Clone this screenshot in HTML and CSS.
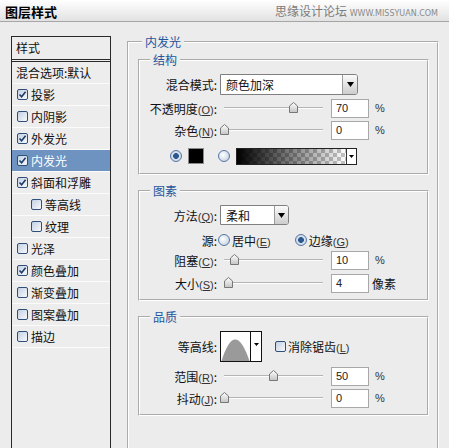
FILE: index.html
```html
<!DOCTYPE html>
<html lang="zh">
<head>
<meta charset="utf-8">
<title>图层样式</title>
<link rel="stylesheet" href="styles.css">
</head>
<body>
<div class="titlebar">
  <span class="title">图层样式</span>
  <span class="brand">思缘设计论坛 <span class="url">www.MISSYUAN.COM</span></span>
</div>
<div class="main">
  <div class="sidebar">
    <div class="side-head">样式</div>
    <div class="side-row plain">混合选项:默认</div>
    <div class="side-row"><span class="cb on"><svg viewBox="0 0 9 9" width="9" height="9"><path d="M1.5 4.5 L3.6 6.8 L7.6 1.8" fill="none" stroke="#1d3d69" stroke-width="1.6"/></svg></span>投影</div>
    <div class="side-row"><span class="cb"></span>内阴影</div>
    <div class="side-row"><span class="cb on"><svg viewBox="0 0 9 9" width="9" height="9"><path d="M1.5 4.5 L3.6 6.8 L7.6 1.8" fill="none" stroke="#1d3d69" stroke-width="1.6"/></svg></span>外发光</div>
    <div class="side-row active"><span class="cb on"><svg viewBox="0 0 9 9" width="9" height="9"><path d="M1.5 4.5 L3.6 6.8 L7.6 1.8" fill="none" stroke="#1d3d69" stroke-width="1.6"/></svg></span>内发光</div>
    <div class="side-row"><span class="cb on"><svg viewBox="0 0 9 9" width="9" height="9"><path d="M1.5 4.5 L3.6 6.8 L7.6 1.8" fill="none" stroke="#1d3d69" stroke-width="1.6"/></svg></span>斜面和浮雕</div>
    <div class="side-row sub"><span class="cb"></span>等高线</div>
    <div class="side-row sub"><span class="cb"></span>纹理</div>
    <div class="side-row"><span class="cb"></span>光泽</div>
    <div class="side-row"><span class="cb on"><svg viewBox="0 0 9 9" width="9" height="9"><path d="M1.5 4.5 L3.6 6.8 L7.6 1.8" fill="none" stroke="#1d3d69" stroke-width="1.6"/></svg></span>颜色叠加</div>
    <div class="side-row"><span class="cb"></span>渐变叠加</div>
    <div class="side-row"><span class="cb"></span>图案叠加</div>
    <div class="side-row"><span class="cb"></span>描边</div>
  </div>

  <div class="content">
    <fieldset class="outer">
      <legend class="lg-outer">内发光</legend>

      <fieldset class="group g1">
        <legend>结构</legend>
        <div class="row r-mode">
          <span class="lbl">混合模式:</span>
          <div class="select wide"><span class="sel-text">颜色加深</span><span class="sel-btn"><svg width="7" height="5" viewBox="0 0 7 5"><path d="M0 0 H7 L3.5 5 Z" fill="#000"/></svg></span></div>
        </div>
        <div class="row r-op">
          <span class="lbl">不透明度<span class="k">(<u>O</u>)</span>:</span>
          <div class="slider"><svg class="thumb" style="left:69px" width="9" height="11" viewBox="0 0 9 11"><defs><linearGradient id="tg1" x1="0" y1="0" x2="0" y2="1"><stop offset="0" stop-color="#fff"/><stop offset="1" stop-color="#c4c4c4"/></linearGradient></defs><path d="M0.5 10.5 V4 L4.5 0.5 L8.5 4 V10.5 Z" fill="url(#tg1)" stroke="#777"/></svg></div>
          <span class="num">70</span><span class="unit">%</span>
        </div>
        <div class="row r-noise">
          <span class="lbl">杂色<span class="k">(<u>N</u>)</span>:</span>
          <div class="slider"><svg class="thumb" style="left:0px" width="9" height="11" viewBox="0 0 9 11"><path d="M0.5 10.5 V4 L4.5 0.5 L8.5 4 V10.5 Z" fill="url(#tg1)" stroke="#777"/></svg></div>
          <span class="num">0</span><span class="unit">%</span>
        </div>
        <div class="row r-color">
          <span class="radio on"></span>
          <span class="swatch"></span>
          <span class="radio r2"></span>
          <div class="grad"><span class="grad-fill"></span><span class="grad-btn"><svg width="5" height="3" viewBox="0 0 5 3"><path d="M0 0 H5 L2.5 3 Z" fill="#000"/></svg></span></div>
        </div>
      </fieldset>

      <fieldset class="group g2">
        <legend>图素</legend>
        <div class="row r-method">
          <span class="lbl">方法<span class="k">(<u>Q</u>)</span>:</span>
          <div class="select narrow"><span class="sel-text">柔和</span><span class="sel-btn"><svg width="7" height="5" viewBox="0 0 7 5"><path d="M0 0 H7 L3.5 5 Z" fill="#000"/></svg></span></div>
        </div>
        <div class="row r-src">
          <span class="lbl">源:</span>
          <span class="radio src1"></span><span class="opt">居中<span class="k">(<u>E</u>)</span></span>
          <span class="radio on src2"></span><span class="opt">边缘<span class="k">(<u>G</u>)</span></span>
        </div>
        <div class="row r-choke">
          <span class="lbl">阻塞<span class="k">(<u>C</u>)</span>:</span>
          <div class="slider"><svg class="thumb" style="left:10px" width="9" height="11" viewBox="0 0 9 11"><path d="M0.5 10.5 V4 L4.5 0.5 L8.5 4 V10.5 Z" fill="url(#tg1)" stroke="#777"/></svg></div>
          <span class="num">10</span><span class="unit">%</span>
        </div>
        <div class="row r-size">
          <span class="lbl">大小<span class="k">(<u>S</u>)</span>:</span>
          <div class="slider"><svg class="thumb" style="left:4px" width="9" height="11" viewBox="0 0 9 11"><path d="M0.5 10.5 V4 L4.5 0.5 L8.5 4 V10.5 Z" fill="url(#tg1)" stroke="#777"/></svg></div>
          <span class="num">4</span><span class="unit px">像素</span>
        </div>
      </fieldset>

      <fieldset class="group g3">
        <legend>品质</legend>
        <div class="row r-contour">
          <span class="lbl">等高线:</span>
          <div class="contour">
            <svg width="29" height="29" viewBox="0 0 29 29"><rect width="29" height="29" fill="#fff"/><path d="M0.5 29 Q14 -14 28.5 29 Z" fill="#9a9a9a"/></svg>
            <span class="ct-btn"><svg width="5" height="3" viewBox="0 0 5 3"><path d="M0 0 H5 L2.5 3 Z" fill="#000"/></svg></span>
          </div>
          <span class="cb aa"></span><span class="opt">消除锯齿<span class="k">(<u>L</u>)</span></span>
        </div>
        <div class="row r-range">
          <span class="lbl">范围<span class="k">(<u>R</u>)</span>:</span>
          <div class="slider"><svg class="thumb" style="left:49px" width="9" height="11" viewBox="0 0 9 11"><path d="M0.5 10.5 V4 L4.5 0.5 L8.5 4 V10.5 Z" fill="url(#tg1)" stroke="#777"/></svg></div>
          <span class="num">50</span><span class="unit">%</span>
        </div>
        <div class="row r-jitter">
          <span class="lbl">抖动<span class="k">(<u>J</u>)</span>:</span>
          <div class="slider"><svg class="thumb" style="left:0px" width="9" height="11" viewBox="0 0 9 11"><path d="M0.5 10.5 V4 L4.5 0.5 L8.5 4 V10.5 Z" fill="url(#tg1)" stroke="#777"/></svg></div>
          <span class="num">0</span><span class="unit">%</span>
        </div>
      </fieldset>
    </fieldset>
  </div>
</div>
</body>
</html>
```

FILE: styles.css
```css
* { box-sizing: border-box; }
html, body { margin: 0; padding: 0; }
body {
  width: 449px;
  height: 448px;
  overflow: hidden;
  background: #ececec;
  font-family: "Noto Sans CJK SC", sans-serif;
  font-size: 12px;
  color: #111;
}

/* title bar */
.titlebar {
  height: 22px;
  display: flex;
  justify-content: space-between;
  padding: 0 11px 0 5px;
  background: linear-gradient(#ffffff, #e2e2e2);
  border-bottom: 1px solid #a6a6a6;
}
.title {
  font-weight: bold;
  font-size: 13px;
  line-height: 18px;
  padding-top: 3px;
  color: #000;
}
.brand {
  align-self: flex-end;
  line-height: 14px;
  padding-bottom: 0;
  color: #7c7c7c;
  font-size: 12px;
}
.url {
  font-family: "DejaVu Sans", sans-serif;
  font-size: 8px;
  text-transform: uppercase;
  color: #8a8a8a;
}

/* main */
.main {
  display: flex;
  align-items: flex-start;
}

.sidebar {
  margin: 14px 0 0 11px;
  width: 100px;
  height: 430px;
  border: 1px solid #2a2a2a;
  background: #ededed;
  flex: none;
}
.side-head {
  height: 25px;
  line-height: 22px;
  padding-left: 4px;
  border-bottom: 3px double #2a2a2a;
}
.side-row {
  height: 22px;
  display: flex;
  align-items: center;
  gap: 3px;
  padding-left: 5px;
  border-bottom: 1px solid #fbfbfb;
  white-space: nowrap;
}
.side-row.plain { padding-left: 4px; }
.side-row.sub { padding-left: 19px; }
.side-row.active {
  background: #6e93c1;
  color: #fff;
}

.cb {
  width: 11px;
  height: 11px;
  flex: none;
  border: 1px solid #2f4f78;
  border-radius: 2px;
  background: linear-gradient(135deg, #c3d0e2, #f7f9fc);
  display: inline-flex;
  align-items: center;
  justify-content: center;
}
.cb svg { display: block; }

/* content */
.content {
  margin: 12px 0 0 16px;
  width: 312px;
  flex: none;
}
fieldset {
  margin: 0;
  min-width: 0;
  border: 2px groove #ffffff;
}
legend {
  line-height: 16px;
  padding: 0 3px;
  color: #24569c;
  font-size: 12px;
}
.outer {
  padding: 2px 8px 60px 9px;
}
.lg-outer { margin-left: 4px; }
.group {
  padding: 0 0 6px 0;
}
.group legend { margin-left: 10px; }
.g1 { padding-bottom: 8px; }
.g2 { margin-top: 8px; }
.g3 { margin-top: 8px; }

.row {
  display: flex;
  align-items: center;
  height: 20px;
  white-space: nowrap;
}
.lbl {
  width: 77px;
  margin-right: 3px;
  text-align: right;
  flex: none;
}
.k {
  font-family: "Liberation Sans", sans-serif;
  font-size: 11px;
  color: #333;
}

.r-mode { margin-top: 6px; height: 21px; }
.r-op { margin-top: 3px; }
.r-noise { margin-top: 2px; }
.r-color { margin-top: 7px; height: 18px; padding-left: 30px; }

.r-method { margin-top: 6px; }
.r-src { margin-top: 7px; height: 16px; }
.r-choke { margin-top: 2px; }
.r-size { margin-top: 3px; }

.r-contour { margin-top: 6px; height: 31px; }
.r-range { margin-top: 4px; }
.r-jitter { margin-top: 2px; }

/* select */
.select {
  display: flex;
  height: 100%;
  background: #fff;
  border: 1px solid #808080;
  border-radius: 0 3px 3px 0;
  flex: none;
}
.select.wide { width: 138px; }
.select.narrow { width: 69px; }
.sel-text {
  flex: 1;
  padding-left: 5px;
  line-height: 19px;
}
.sel-btn {
  width: 15px;
  display: flex;
  align-items: center;
  justify-content: center;
  background: linear-gradient(#fbfbfb, #cdcdcd);
  border-left: 1px solid #9b9b9b;
  border-radius: 0 2px 2px 0;
}
.narrow .sel-btn { width: 14px; }

/* slider */
.slider {
  position: relative;
  width: 106px;
  height: 100%;
  flex: none;
  background:
    linear-gradient(#b4b4b4, #b4b4b4) no-repeat 4px 9px / 99px 1px,
    linear-gradient(#fdfdfd, #fdfdfd) no-repeat 4px 10px / 99px 1px;
}
.thumb {
  position: absolute;
  top: 4px;
  display: block;
}

.num {
  width: 38px;
  height: 19px;
  margin-left: 5px;
  border: 1px solid #a8a8a8;
  background: #fff;
  padding-left: 4px;
  font-family: "Liberation Sans", sans-serif;
  font-size: 11px;
  line-height: 17px;
  color: #222;
  flex: none;
}
.unit {
  margin-left: 6px;
  font-family: "Liberation Sans", sans-serif;
  font-size: 11px;
  color: #333;
}
.unit.px {
  font-family: "Noto Sans CJK SC", sans-serif;
  font-size: 12px;
  margin-left: 3px;
  color: #111;
}

/* radios */
.radio {
  width: 12px;
  height: 12px;
  flex: none;
  border-radius: 50%;
  border: 1px solid #5877a0;
  background: radial-gradient(circle at 40% 40%, #ffffff 0, #dfe7f1 45%, #b8c8dc 100%);
}
.radio.on {
  background: radial-gradient(circle, #2c5890 0 2.6px, #dce5f0 3.2px, #b5c6db 100%);
}
.swatch {
  width: 16px;
  height: 16px;
  margin-left: 6px;
  background: #000;
  border: 1px solid #8a8a8a;
  flex: none;
}
.radio.r2 { margin-left: 14px; }
.grad {
  margin-left: 6px;
  width: 121px;
  height: 17px;
  border: 1px solid #222;
  display: flex;
  flex: none;
}
.grad-fill {
  flex: 1;
  background:
    linear-gradient(to right, #000, rgba(0,0,0,0)),
    conic-gradient(#c4c4c4 25%, #ffffff 0 50%, #c4c4c4 0 75%, #ffffff 0) 0 0 / 8px 8px;
}
.grad-btn {
  width: 10px;
  border-left: 1px solid #333;
  background: #fff;
  display: flex;
  align-items: center;
  justify-content: center;
}

.src1 { margin-left: -2px; }
.opt { margin-left: 2px; }
.src2 { margin-left: 24px; }

/* contour */
.contour {
  width: 42px;
  height: 31px;
  border: 1px solid #111;
  display: flex;
  flex: none;
}
.contour svg { display: block; }
.ct-btn {
  flex: 1;
  border-left: 1px solid #111;
  background: #fff;
  display: flex;
  justify-content: center;
  padding-top: 11px;
}
.ct-btn svg { display: block; }
.cb.aa { margin-left: 13px; }
```
